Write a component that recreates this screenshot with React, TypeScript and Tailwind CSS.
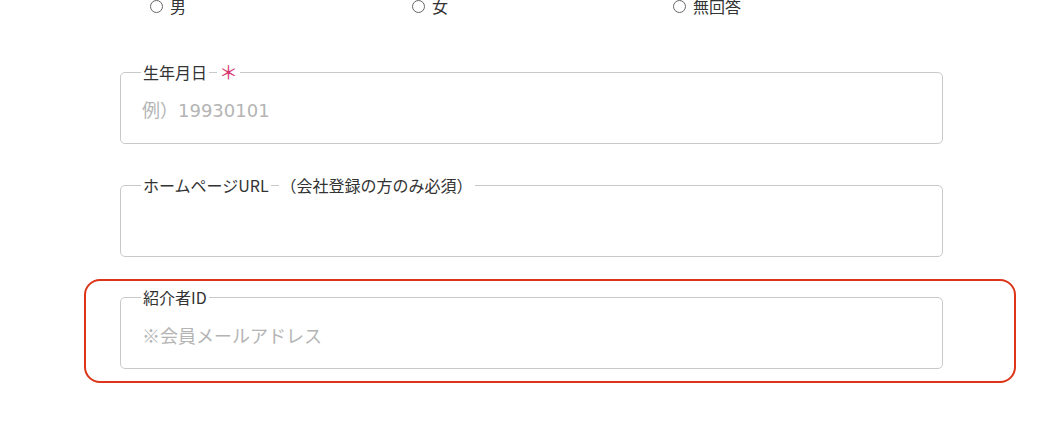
// Registration form excerpt — birth date, homepage URL, referrer ID
const font = { fontFamily: '"Noto Sans CJK JP", "Noto Sans", sans-serif' };

function Radio({ label }: { label: string }) {
  return (
    <label className="flex items-center gap-[7px] text-[16px] text-[#333] leading-none">
      <span className="w-[13px] h-[13px] rounded-full border border-[#666] bg-white" />
      {label}
    </label>
  );
}

function Field({
  parts,
  placeholder,
  latin,
}: {
  parts: { text: string; required?: boolean }[];
  placeholder?: string;
  latin?: boolean;
}) {
  return (
    <div className="relative h-[72px] border border-[#c9c9c9] rounded-[5px] bg-white">
      <div className="absolute -top-[12px] left-[20px] flex items-center gap-[8px] text-[16px] leading-[22px]">
        {parts.map((p, i) => (
          <span
            key={i}
            className={`bg-white px-[2px] ${p.required ? "text-[#d6336c] text-[19px] leading-[22px]" : "text-[#333]"}`}
          >
            {p.text}
          </span>
        ))}
      </div>
      <input
        className={`w-full h-full px-[21px] pt-[4px] text-[18px] text-[#333] placeholder:text-[#b4b4b4] outline-none bg-transparent ${
          latin ? "font-['DejaVu_Sans','Noto_Sans_CJK_JP',sans-serif]" : ""
        }`}
        placeholder={placeholder}
      />
    </div>
  );
}

export default function App() {
  return (
    <div className="w-[1042px] h-[429px] bg-white overflow-hidden" style={font}>
      <div className="w-[823px] ml-[120px] -mt-[2px]">
        {/* ── Gender radios ─────────────────────────── */}
        <div className="grid grid-cols-[262px_261px_1fr] pl-[30px]">
          <Radio label="男" />
          <Radio label="女" />
          <Radio label="無回答" />
        </div>

        {/* ── Fields ────────────────────────────────── */}
        <div className="mt-[58px] flex flex-col gap-[40px]">
          <Field parts={[{ text: "生年月日" }, { text: "＊", required: true }]} placeholder="例）19930101" latin />
          <div className="mt-px">
            <Field parts={[{ text: "ホームページURL" }, { text: "（会社登録の方のみ必須）" }]} />
          </div>
          <div className="relative">
            <div className="absolute -top-[18px] -bottom-[14px] -left-[36px] -right-[73px] border-2 border-[#dc3519] rounded-[16px]" />
            <Field parts={[{ text: "紹介者ID" }]} placeholder="※会員メールアドレス" />
          </div>
        </div>
      </div>
    </div>
  );
}
